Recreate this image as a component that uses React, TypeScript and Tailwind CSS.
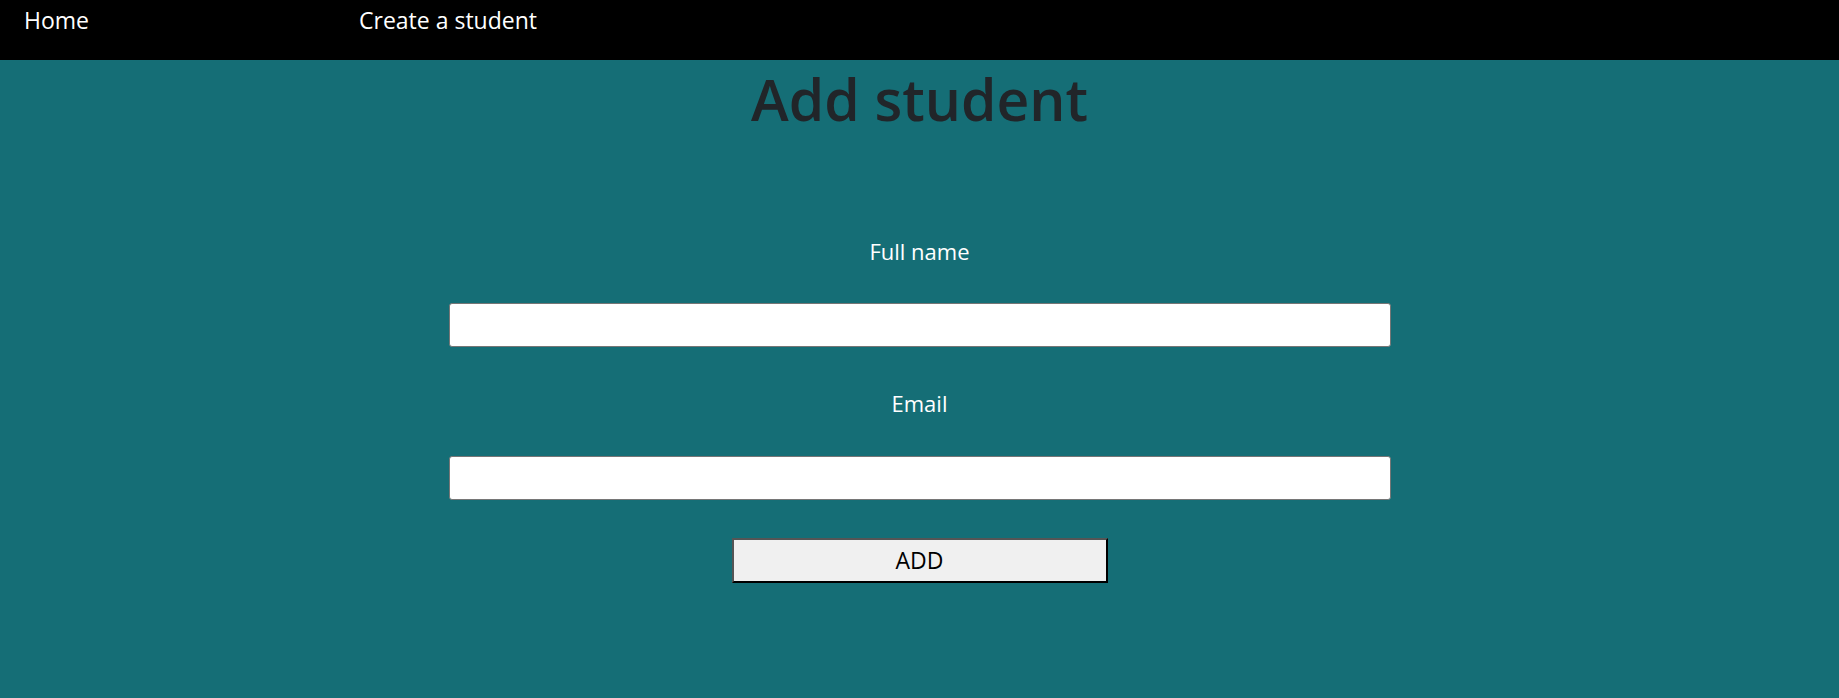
const font = { fontFamily: '"Open Sans", "Noto Sans", sans-serif' };

function Field({ label, className = '', gap }: { label: string; className?: string; gap: string }) {
  return (
    <div className={`flex flex-col items-center ${className}`}>
      <label className="block text-[22px] leading-[30px] text-white">{label}</label>
      <input
        type="text"
        className={`${gap} h-[44px] w-[942px] rounded-[3px] border border-[#767676] bg-white px-2 outline-none`}
      />
    </div>
  );
}

export default function App() {
  return (
    <div className="min-h-[698px] bg-[#156e76]" style={font}>
      <nav className="flex h-[60px] items-start bg-black pl-[24px] pt-[5px] text-[23px] leading-[31px] text-white">
        <a href="#" className="w-[335px]">Home</a>
        <a href="#">Create a student</a>
      </nav>

      <main className="flex flex-col items-center">
        <h1 className="mt-[11px] text-[57px] font-semibold leading-none text-[#212529]">Add student</h1>

        <form className="mt-[108px] flex flex-col items-center" onSubmit={(e) => e.preventDefault()}>
          <Field label="Full name" gap="mt-[37px]" />
          <Field label="Email" className="mt-[41px]" gap="mt-[38px]" />
          <button
            type="submit"
            className="mt-[38px] h-[45px] w-[376px] border-2 border-t-[#555] border-l-[#555] border-b-black border-r-black bg-[#f0f0f0] text-[23px] text-black"
          >
            ADD
          </button>
        </form>
      </main>
    </div>
  );
}
